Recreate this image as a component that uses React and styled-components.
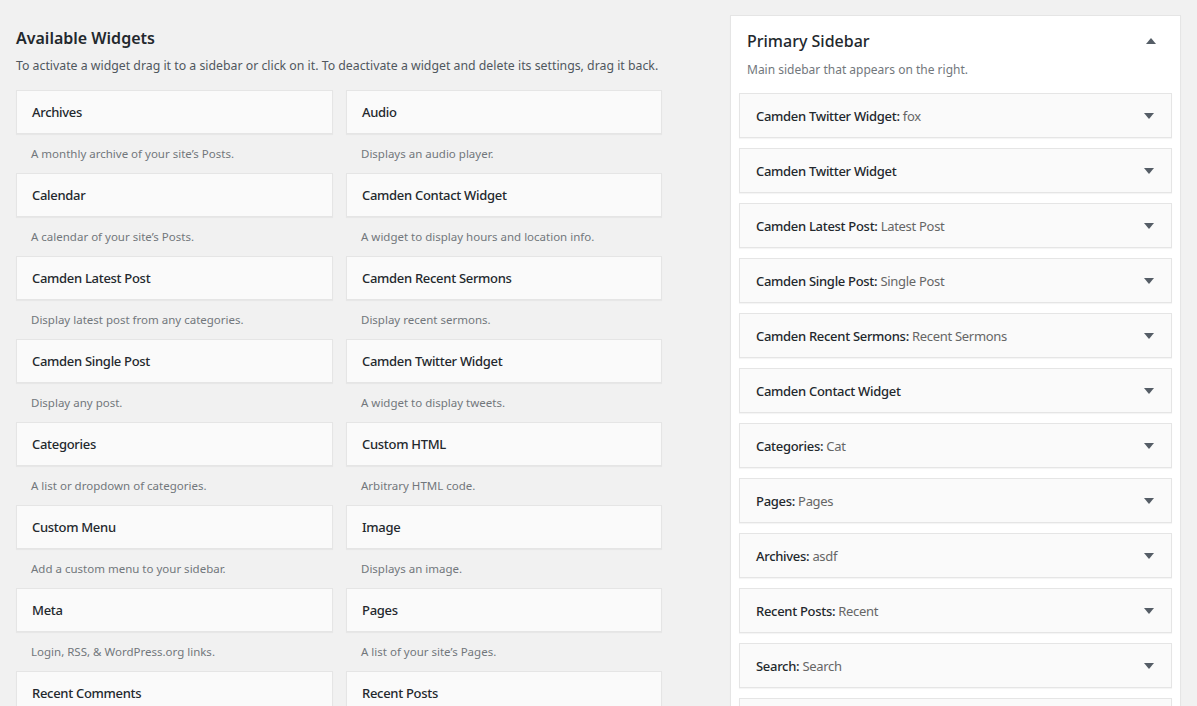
import React from 'react';
import styled, { createGlobalStyle } from 'styled-components';

const GlobalStyle = createGlobalStyle`
  html, body {
    margin: 0;
    padding: 0;
    background: #f1f1f1;
    font-family: "Noto Sans", "Open Sans", sans-serif;
    color: #23282d;
    overflow: hidden;
  }
`;

const Page = styled.div`
  display: flex;
  align-items: flex-start;
  height: 706px;
  overflow: hidden;
  padding: 0 16px;
`;

const Available = styled.section`
  width: 646px;
  padding-top: 27px;
`;

const Heading = styled.h2`
  margin: 0;
  font-size: 16px;
  font-weight: 600;
  line-height: 22px;
`;

const Intro = styled.p`
  margin: 8px 0 15px;
  font-size: 12.3px;
  line-height: 18px;
  white-space: nowrap;
  color: #50575e;
`;

const Grid = styled.div`
  display: grid;
  grid-template-columns: 317px 316px;
  column-gap: 13px;
`;

const Widget = styled.div``;

const WidgetTop = styled.div`
  height: 42px;
  display: flex;
  align-items: center;
  padding: 0 15px;
  background: #fafafa;
  border: 1px solid #e5e5e5;
  box-shadow: 0 1px 1px rgba(0, 0, 0, 0.04);
  font-size: 13px;
  font-weight: 500;
  letter-spacing: -0.3px;
`;

const WidgetDesc = styled.div`
  padding: 11px 15px 10px;
  font-size: 11.5px;
  line-height: 18px;
  color: #72777c;
`;

const Sidebar = styled.section`
  margin-left: 68px;
  margin-top: 15px;
  width: 450px;
  background: #fff;
  border: 1px solid #e5e5e5;
  box-shadow: 0 1px 1px rgba(0, 0, 0, 0.04);
  padding: 0 8px 20px;
`;

const SidebarHead = styled.div`
  display: flex;
  justify-content: space-between;
  align-items: center;
  padding: 14px 16px 0 8px;
`;

const SidebarTitle = styled.h2`
  margin: 0;
  font-size: 16px;
  font-weight: 500;
  line-height: 22px;
`;

const SidebarDesc = styled.p`
  margin: 9px 8px 14px;
  font-size: 12px;
  line-height: 18px;
  color: #72777c;
`;

const Rows = styled.div`
  display: flex;
  flex-direction: column;
  gap: 10px;
`;

const Row = styled.div`
  height: 43px;
  display: flex;
  align-items: center;
  justify-content: space-between;
  padding: 0 17px 0 16px;
  background: #fafafa;
  border: 1px solid #e5e5e5;
  box-shadow: 0 1px 1px rgba(0, 0, 0, 0.04);
  font-size: 13px;
  font-weight: 500;
  letter-spacing: -0.3px;
`;

const InTitle = styled.span`
  font-weight: 400;
  color: #666;
`;

const Arrow = ({ up }) => (
  <svg width="10" height="6" viewBox="0 0 10 6" style={{ flexShrink: 0 }}>
    <path d={up ? 'M0 6 L5 0 L10 6 Z' : 'M0 0 L10 0 L5 6 Z'} fill="#555d66" />
  </svg>
);

const widgets = [
  ['Archives', 'A monthly archive of your site\u2019s Posts.'],
  ['Audio', 'Displays an audio player.'],
  ['Calendar', 'A calendar of your site\u2019s Posts.'],
  ['Camden Contact Widget', 'A widget to display hours and location info.'],
  ['Camden Latest Post', 'Display latest post from any categories.'],
  ['Camden Recent Sermons', 'Display recent sermons.'],
  ['Camden Single Post', 'Display any post.'],
  ['Camden Twitter Widget', 'A widget to display tweets.'],
  ['Categories', 'A list or dropdown of categories.'],
  ['Custom HTML', 'Arbitrary HTML code.'],
  ['Custom Menu', 'Add a custom menu to your sidebar.'],
  ['Image', 'Displays an image.'],
  ['Meta', 'Login, RSS, & WordPress.org links.'],
  ['Pages', 'A list of your site\u2019s Pages.'],
  ['Recent Comments', 'Your site\u2019s most recent comments.'],
  ['Recent Posts', 'Your site\u2019s most recent Posts.'],
];

const sidebarWidgets = [
  ['Camden Twitter Widget', 'fox'],
  ['Camden Twitter Widget', ''],
  ['Camden Latest Post', 'Latest Post'],
  ['Camden Single Post', 'Single Post'],
  ['Camden Recent Sermons', 'Recent Sermons'],
  ['Camden Contact Widget', ''],
  ['Categories', 'Cat'],
  ['Pages', 'Pages'],
  ['Archives', 'asdf'],
  ['Recent Posts', 'Recent'],
  ['Search', 'Search'],
  ['Text', 'About'],
];

export default function App() {
  return (
    <>
      <GlobalStyle />
      <Page>
        <Available>
          <Heading>Available Widgets</Heading>
          <Intro>
            To activate a widget drag it to a sidebar or click on it. To deactivate a widget and
            delete its settings, drag it back.
          </Intro>
          <Grid>
            {widgets.map(([name, desc]) => (
              <Widget key={name}>
                <WidgetTop>{name}</WidgetTop>
                <WidgetDesc>{desc}</WidgetDesc>
              </Widget>
            ))}
          </Grid>
        </Available>
        <Sidebar>
          <SidebarHead>
            <SidebarTitle>Primary Sidebar</SidebarTitle>
            <Arrow up />
          </SidebarHead>
          <SidebarDesc>Main sidebar that appears on the right.</SidebarDesc>
          <Rows>
            {sidebarWidgets.map(([name, title], i) => (
              <Row key={i}>
                <span>
                  {name}
                  {title && (
                    <>
                      :<InTitle> {title}</InTitle>
                    </>
                  )}
                </span>
                <Arrow />
              </Row>
            ))}
          </Rows>
        </Sidebar>
      </Page>
    </>
  );
}
